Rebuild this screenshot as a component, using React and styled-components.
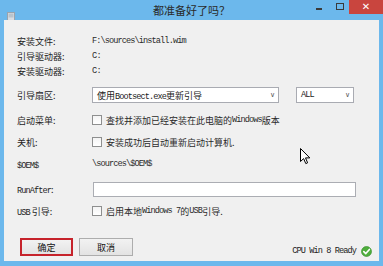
import React from "react";
import styled, { createGlobalStyle } from "styled-components";

const Global = createGlobalStyle`
  html, body { margin: 0; padding: 0; background: #6cb8ec; }
  body { font-family: "Noto Sans CJK SC", "Liberation Sans", sans-serif; }
`

const Window = styled.div`
  position: relative;
  width: 383px;
  height: 266px;
  background: #6cb8ec;
  display: flex;
  flex-direction: column;
  padding: 0 4px 5px 4px;
  box-sizing: border-box;
  overflow: hidden;
`
const TitleBar = styled.div`
  height: 20px;
  margin: 0 -4px;
  display: grid;
  grid-template-columns: 1fr auto 1fr;
  align-items: start;
`
const AppIcon = styled.div`
  padding: 3px 0 0 7px;
  height: 12px;
`
const Title = styled.div`
  font-size: 11px;
  line-height: 20px;
  color: #2a2a2a;
`
const Controls = styled.div`
  justify-self: end;
  display: flex;
  align-items: flex-start;
`
const MinBtn = styled.div`
  width: 6px;
  height: 2px;
  background: #3a3a3a;
  margin: 8px 14px 0 0;
`
const MaxBtn = styled.div`
  width: 6px;
  height: 5px;
  border: 1px solid #3a3a3a;
  margin: 3px 5px 0 0;
`
const CloseBtn = styled.div`
  width: 34px;
  height: 14px;
  background: #c9453e;
  color: #fff;
  font-family: "DejaVu Sans", sans-serif;
  font-size: 10px;
  line-height: 14px;
  text-align: center;
  font-weight: bold;
`
const Client = styled.div`
  flex: 1;
  background: #f0f0f0;
  padding: 14px 7px 0 13px;
  display: flex;
  flex-direction: column;
`
const Row = styled.div`
  display: grid;
  grid-template-columns: 75px 1fr;
  align-items: center;
  height: ${p => p.h || 14}px;
  margin-top: ${p => p.mt || 0}px;
`
const Label = styled.div`
  font-size: 9px;
  color: #1e1e1e;
  white-space: nowrap;
`
const Value = styled.div`
  font-size: 9px;
  color: #2a2a2a;
  white-space: nowrap;
  display: flex;
  align-items: center;
`
const Mono = styled.span`
  font-family: "Liberation Mono", monospace;
  font-size: 8.6px;
  letter-spacing: ${p => p.tight ? -0.9 : -0.7}px;
`
const Selects = styled.div`
  display: flex;
  align-items: center;
  gap: 17px;
`
const Select = styled.div`
  width: ${p => p.w}px;
  height: 16px;
  box-sizing: border-box;
  border: 1px solid #a9abb2;
  background: #fff;
  display: flex;
  align-items: center;
  justify-content: space-between;
  padding: 0 3px 0 4px;
  font-size: 9px;
  color: #222;
  white-space: nowrap;
`
const Chevron = styled.span`
  font-family: "DejaVu Sans", sans-serif;
  font-size: 7px;
  color: #555;
`
const Check = styled.span`
  width: 8px;
  height: 8px;
  border: 1px solid #8e8f8f;
  background: linear-gradient(#f4f4f4, #ffffff);
  margin-right: 4px;
  flex: none;
`
const TextInput = styled.div`
  width: 263px;
  height: 15px;
  box-sizing: border-box;
  border: 1px solid #abadb3;
  background: #fff;
  margin-left: 1px;
`
const Footer = styled.div`
  display: flex;
  align-items: center;
  margin-top: 20px;
  height: 18px;
`
const Button = styled.div`
  width: ${p => p.primary ? 53 : 54}px;
  height: 18px;
  box-sizing: border-box;
  border: ${p => p.primary ? "2px solid #c6232b" : "1px solid #adadad"};
  background: linear-gradient(#f2f2f2, #e3e3e3);
  margin-left: ${p => p.primary ? 3 : 6}px;
  font-size: 9px;
  color: #111;
  display: flex;
  align-items: center;
  justify-content: center;
`
const Status = styled.div`
  margin-left: auto;
  display: flex;
  align-items: center;
  gap: 5px;
  padding-top: 8px;
  font-size: 9px;
  color: #222;
`
const Cursor = styled.svg`
  position: absolute;
  left: 300px;
  top: 148px;
`

const CheckRow = ({ children }) => (
  <Value><Check />{children}</Value>
)

const App = () => {
  return (
    <>
      <Global />
      <Window>
        <TitleBar>
          <AppIcon>
            <svg width="8" height="10" viewBox="0 0 8 10">
              <rect x="0.5" y="0.5" width="7" height="9" fill="#d8dde3" stroke="#9aa3ad" />
              <rect x="1.5" y="1.5" width="5" height="4" fill="#b9c3cc" />
            </svg>
          </AppIcon>
          <Title>都准备好了吗？</Title>
          <Controls>
            <MinBtn />
            <MaxBtn />
            <CloseBtn>✕</CloseBtn>
          </Controls>
        </TitleBar>
        <Client>
          <Row>
            <Label>安装文件:</Label>
            <Value><Mono tight>F:\sources\install.wim</Mono></Value>
          </Row>
          <Row mt={1}>
            <Label>引导驱动器:</Label>
            <Value><Mono>C:</Mono></Value>
          </Row>
          <Row mt={1}>
            <Label>安装驱动器:</Label>
            <Value><Mono>C:</Mono></Value>
          </Row>
          <Row mt={9} h={16}>
            <Label>引导扇区:</Label>
            <Selects>
              <Select w={187}>
                <span>使用<Mono tight>Bootsect.exe</Mono>更新引导</span>
                <Chevron>∨</Chevron>
              </Select>
              <Select w={58}>
                <Mono tight>ALL</Mono>
                <Chevron>∨</Chevron>
              </Select>
            </Selects>
          </Row>
          <Row mt={10}>
            <Label>启动菜单:</Label>
            <CheckRow>查找并添加已经安装在此电脑的<Mono tight>Windows</Mono>版本</CheckRow>
          </Row>
          <Row mt={8}>
            <Label>关机:</Label>
            <CheckRow>安装成功后自动重新启动计算机.</CheckRow>
          </Row>
          <Row mt={8}>
            <Label><Mono tight>$OEM$</Mono></Label>
            <Value><Mono tight>\sources\$OEM$</Mono></Value>
          </Row>
          <Row mt={11} h={15}>
            <Label><Mono tight>RunAfter</Mono>:</Label>
            <TextInput />
          </Row>
          <Row mt={7}>
            <Label><Mono tight>USB</Mono> 引导:</Label>
            <CheckRow>启用本地<Mono tight>Windows 7</Mono>的<Mono tight>USB</Mono>引导.</CheckRow>
          </Row>
          <Footer>
            <Button primary>确定</Button>
            <Button>取消</Button>
            <Status>
              <Mono tight>CPU Win 8 Ready</Mono>
              <svg width="11" height="11" viewBox="0 0 11 11">
                <circle cx="5.5" cy="5.5" r="5" fill="#4fae3c" stroke="#2f8a25" strokeWidth="0.6" />
                <path d="M2.8 5.6 L4.8 7.6 L8.4 3.4" fill="none" stroke="#fff" strokeWidth="1.6" strokeLinecap="round" strokeLinejoin="round" />
              </svg>
            </Status>
          </Footer>
        </Client>
        <Cursor width="11" height="17" viewBox="0 0 11 17">
          <path d="M0.5 0.5 L0.5 13.5 L3.6 10.6 L5.8 15.6 L7.6 14.8 L5.5 9.9 L9.8 9.9 Z" fill="#fff" stroke="#000" strokeWidth="1" strokeLinejoin="round" />
        </Cursor>
      </Window>
    </>
  )
}

export default App
